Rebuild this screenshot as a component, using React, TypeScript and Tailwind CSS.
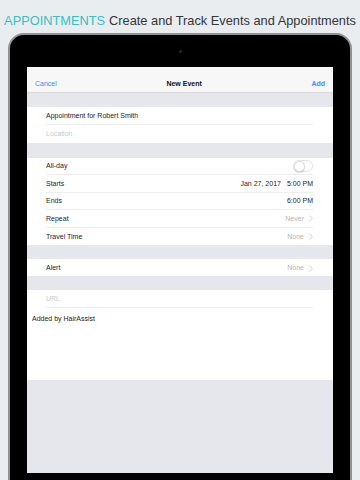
const font = { fontFamily: '"Liberation Sans", Arial, sans-serif' };

function Gap({ h }: { h: string }) {
  return <div className={`${h} bg-[#e6e7ec]`} />;
}

function Row({
  label,
  value,
  chevron,
  muted,
  sep = true,
  h = "h-[17.5px]",
  children,
}: {
  label: string;
  value?: string;
  chevron?: boolean;
  muted?: boolean;
  sep?: boolean;
  h?: string;
  children?: React.ReactNode;
}) {
  return (
    <div className={`${h} bg-white flex flex-col`}>
      <div className="flex-1 flex items-center justify-between pl-[19px] pr-[20px] pt-[1px]">
        <span className={muted ? "text-[#c9c9ce]" : "text-[#1c1c1e]"}>{label}</span>
        {children}
        {value && (
          <span className="flex items-center gap-[5px] text-[#b4b4b8]">
            {value}
            {chevron && (
              <svg width="4" height="7" viewBox="0 0 4 7" fill="none">
                <path d="M0.6 0.6 L3.3 3.5 L0.6 6.4" stroke="#c4c4c8" strokeWidth="0.8" />
              </svg>
            )}
          </span>
        )}
      </div>
      {sep && <div className="ml-[19px] mr-[20px] h-px bg-[#ededf0]" />}
    </div>
  );
}

export default function App() {
  return (
    <div className="w-[360px] h-[480px] overflow-hidden bg-[#e9edf0]" style={font}>
      <div className="h-[33px] flex items-center justify-center pt-[8px] text-[12.8px] whitespace-nowrap">
        <span className="text-[#38bfc3]">APPOINTMENTS</span>
        <span className="text-[#333639] ml-[4px]">Create and Track Events and Appointments</span>
      </div>

      {/* iPad frame */}
      <div className="ml-[8px] w-[344px] h-[470px] rounded-[16px] border-2 border-[#8f9194] bg-black px-[17px] pt-[32px] relative">
        <div className="absolute left-[169px] top-[15px] w-[3px] h-[3px] rounded-full bg-[#2a2a2e]" />

        {/* screen */}
        <div className="w-[306px] h-[406px] bg-[#e6e7ec] text-[7px] flex flex-col">
          <div className="h-[26px] bg-[#f7f7f8] border-b border-[#d8d8dc] flex items-end justify-between pb-[3px] pl-[8px] pr-[8px]">
            <span className="text-[#3d8ef7]">Cancel</span>
            <span className="text-[#111] font-semibold">New Event</span>
            <span className="text-[#3d8ef7] font-semibold">Add</span>
          </div>

          <Gap h="h-[14px]" />
          <Row label="Appointment for Robert Smith" h="h-[18px]" />
          <Row label="Location" muted sep={false} h="h-[18px]" />

          <Gap h="h-[14.5px]" />
          <Row label="All-day">
            <div className="w-[20px] h-[12px] rounded-full border border-[#e3e3e6] bg-white relative">
              <div className="absolute left-[-0.5px] top-[-0.5px] w-[11px] h-[11px] rounded-full bg-white border border-[#d9d9dc] shadow-[0_1px_1px_rgba(0,0,0,0.15)]" />
            </div>
          </Row>
          <Row label="Starts">
            <span className="flex gap-[6px] text-[#1c1c1e]">
              <span>Jan 27, 2017</span>
              <span>5:00 PM</span>
            </span>
          </Row>
          <Row label="Ends">
            <span className="text-[#1c1c1e]">6:00 PM</span>
          </Row>
          <Row label="Repeat" value="Never" chevron />
          <Row label="Travel Time" value="None" chevron sep={false} />

          <Gap h="h-[14px]" />
          <Row label="Alert" value="None" chevron sep={false} h="h-[17px]" />

          <Gap h="h-[14px]" />
          <Row label="URL" muted h="h-[17.5px]" />
          <div className="h-[72.5px] bg-white pl-[5px] pt-[6px] text-[#1c1c1e]">Added by HairAssist</div>
        </div>
      </div>
    </div>
  );
}
